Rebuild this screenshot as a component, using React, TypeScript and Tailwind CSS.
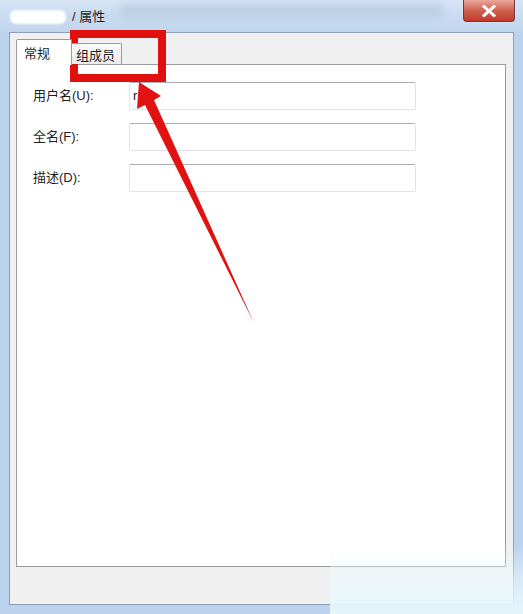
import React from 'react';

const font = { fontFamily: '"Liberation Sans", "Noto Sans CJK SC", sans-serif' };

const fields = [
  { label: '用户名(U):', value: 'r' },
  { label: '全名(F):', value: '' },
  { label: '描述(D):', value: '' },
];

function CloseButton() {
  return (
    <div className="absolute right-[8px] top-0 w-[52px] h-[22px] rounded-b-[4px] border border-t-0 border-[#6d3a3a] bg-gradient-to-b from-[#e9a99c] via-[#d0614f] to-[#c0392b] flex items-center justify-center shadow-[0_0_2px_rgba(255,255,255,0.8)]">
      <svg width="14" height="12" viewBox="0 0 14 12">
        <path d="M2 1.5 L12 10.5 M12 1.5 L2 10.5" stroke="#ffffff" strokeWidth="3" strokeLinecap="square" />
      </svg>
    </div>
  );
}

function Annotation() {
  return (
    <svg className="absolute inset-0 pointer-events-none" width="523" height="614" viewBox="0 0 523 614">
      <rect x="74" y="34" width="88" height="44" fill="none" stroke="#e01010" strokeWidth="8" />
      <polygon points="139,82 161,96 154,100 254,323 145,105 137,109" fill="#e01212" />
    </svg>
  );
}

export default function App() {
  return (
    <div className="relative w-[523px] h-[614px] overflow-hidden bg-[#bcd3ee] flex flex-col" style={font}>
      {/* title bar */}
      <div className="relative h-[32px] shrink-0 bg-gradient-to-b from-[#d7e5f5] via-[#c9dbf0] to-[#c0d5ee] flex items-center pl-[10px]">
        <div className="absolute left-[120px] right-[80px] top-[4px] h-[12px] bg-[#9fb3cc]/40 blur-[4px]" />
        <div className="w-[56px] h-[14px] bg-white rounded-[6px] blur-[1px] mt-[2px]" />
        <span className="relative ml-[6px] mt-[2px] text-[13px] text-[#1e1e1e]">/ 属性</span>
        <CloseButton />
      </div>

      {/* client area */}
      <div className="flex-1 mx-[9px] mb-[9px] border border-[#8e9fb5] bg-[#f0f0f0] flex flex-col pt-[5px] pl-[6px] pr-[7px] pb-[37px]">
        <div className="flex items-end h-[26px] relative z-10">
          <div className="w-[56px] h-[26px] bg-white border border-b-0 border-[#9a9a9a] rounded-t-[2px] text-[13px] text-[#1e1e1e] pl-[7px] pt-[4px] -mb-px">
            常规
          </div>
          <div className="w-[50px] h-[21px] bg-gradient-to-b from-[#fbfbfb] to-[#ececec] border border-l-0 border-b-0 border-[#9a9a9a] rounded-tr-[2px] text-[13px] text-[#1e1e1e] pl-[4px] pt-[2px]">
            组成员
          </div>
        </div>
        <div className="flex-1 bg-white border border-[#9a9a9a] pt-[17px] pl-[16px] flex flex-col gap-[13px]">
          {fields.map(f => (
            <div key={f.label} className="flex items-center h-[28px]">
              <span className="w-[96px] text-[13px] text-[#1e1e1e]">{f.label}</span>
              <div className="w-[287px] h-[28px] rounded-[2px] border border-[#e2e3ea] border-t-[#abadb3] bg-white text-[13px] text-[#1e1e1e] pl-[3px] flex items-center">
                {f.value}
              </div>
            </div>
          ))}
        </div>
      </div>

      {/* watermark haze bottom right */}
      <div className="absolute left-[330px] top-[545px] w-[193px] h-[69px] bg-gradient-to-b from-transparent via-[#eefafd]/60 to-[#e4f7fc] pointer-events-none" />

      <Annotation />
    </div>
  );
}
